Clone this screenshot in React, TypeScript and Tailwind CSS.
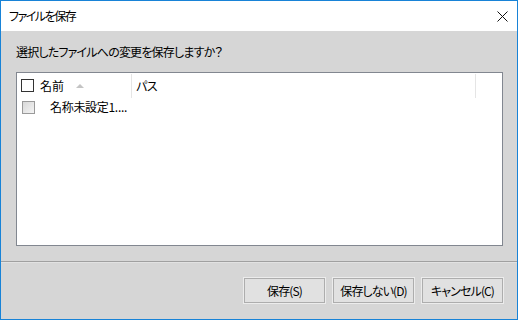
import React from 'react'

const font = { fontFamily: '"Noto Sans CJK JP", "Noto Sans", sans-serif' }

function SortArrow() {
  return (
    <svg width="8" height="5" viewBox="0 0 8 5" className="ml-[12px]">
      <path d="M0 5 L4 1 L8 5 Z" fill="#c4c4c4" />
    </svg>
  )
}

function CloseIcon() {
  return (
    <svg width="11" height="11" viewBox="0 0 11 11">
      <path d="M0.5 0.5 L10.5 10.5 M10.5 0.5 L0.5 10.5" stroke="#111" strokeWidth="1" />
    </svg>
  )
}

export default function App() {
  const buttons = ['保存(S)', '保存しない(D)', 'キャンセル(C)']

  return (
    <div
      className="w-[518px] h-[320px] border border-[#1883d7] flex flex-col text-[12px] text-black bg-[#d6d6d6] [font-feature-settings:'palt']"
      style={font}
    >
      <div className="h-[30px] bg-white flex items-center justify-between pl-[8px] pr-[9px] shrink-0">
        <span className="leading-[16px] tracking-[-1.5px]">ファイルを保存</span>
        <CloseIcon />
      </div>

      <div className="flex-1 flex flex-col">
        <div className="pt-[13px] pl-[15px] leading-[16px] tracking-[-0.8px]">選択したファイルへの変更を保存しますか？</div>

        <div className="mt-[12px] ml-[15px] w-[487px] h-[174px] border border-[#828790] bg-white flex flex-col">
          <div className="h-[25px] flex items-center">
            <div className="w-[114px] flex items-center">
              <div className="ml-[4px] w-[13px] h-[13px] border border-[#333] bg-white" />
              <span className="ml-[6px] leading-[16px]">名前</span>
              <SortArrow />
            </div>
            <div className="w-px h-[24px] bg-[#e5e5e5]" />
            <div className="w-[343px] pl-[4px] leading-[16px] tracking-[-0.5px]">パス</div>
            <div className="w-px h-[24px] bg-[#e5e5e5]" />
          </div>
          <div className="h-[18px] flex items-center">
            <div className="ml-[5px] w-[13px] h-[13px] border border-[#9a9a9a] bg-gradient-to-br from-[#d8d8d8] to-[#f4f4f4]" />
            <span className="ml-[15px] leading-[16px] tracking-[-0.3px]">名称未設定1....</span>
          </div>
        </div>

        <div className="mt-[15px] h-px bg-[#a0a0a0]" />
        <div className="h-px bg-[#e2e2e2]" />

        <div className="pt-[15px] pr-[14px] flex justify-end gap-[8px]">
          {buttons.map(b => (
            <div
              key={b}
              className="w-[81px] h-[25px] border border-[#adadad] bg-[#e1e1e1] shadow-[0_0_0_1px_#ececec] flex items-center justify-center leading-[16px] tracking-[-0.9px]"
            >
              {b}
            </div>
          ))}
        </div>
      </div>
    </div>
  )
}
